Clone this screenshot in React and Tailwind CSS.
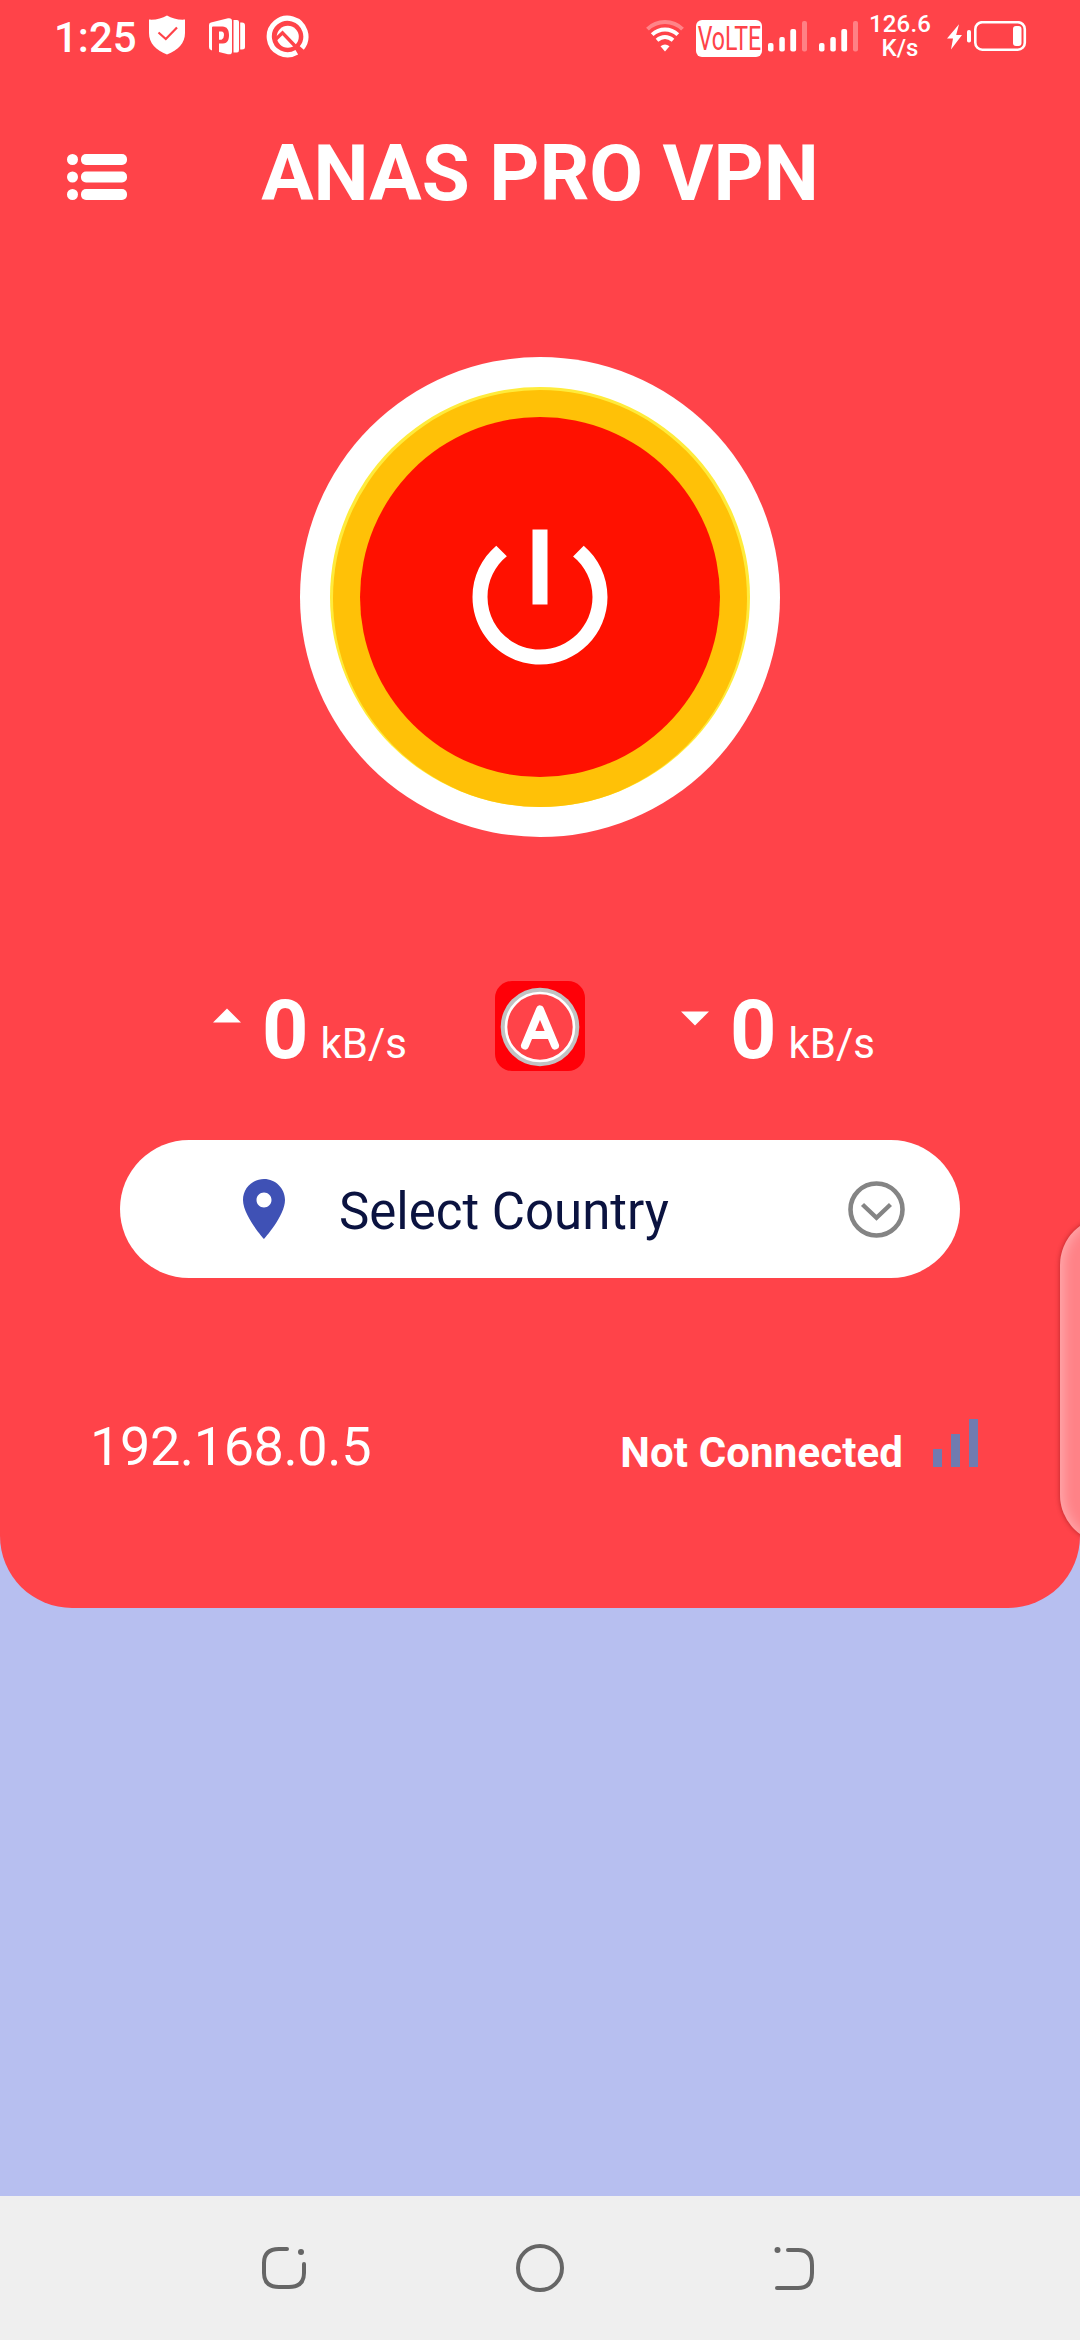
function ShieldIcon() {
  return (
    <svg className="h-10 w-9" viewBox="0 0 36 40">
      <path d="M18 0.5C23 3.5 29 5 36 4.6V18C36 28 29 35.5 18 39.5C7 35.5 0 28 0 18V4.6C7 5 13 3.5 18 0.5Z" fill="#fff" />
      <path d="M9.5 17.5L16.8 24L28 12.5" fill="none" stroke="#ff4349" strokeWidth="2.2" />
    </svg>
  )
}

function CardsIcon() {
  return (
    <svg className="h-[37px] w-9" viewBox="0 0 36 37" fill="#fff">
      <path d="M0 7Q0 5 2 4.6L19 0.3Q23 -0.3 23 3V33.5Q23 37 19 36.2L10 34V25.5H14C19 25.5 20 21 20 17C20 12 18 8.5 13.5 8.5H4Q3 8.5 3 9.5V32.4L2 32Q0 31.5 0 29Z" />
      <path d="M10 13.4H12.5Q15 13.4 15 17T12.5 21.8H10Z" />
      <path d="M24.5 2H28Q30 2 30 4V32Q30 34.5 28 34.5H24.5Z" />
      <path d="M31.2 4.5H33Q36 4.5 36 7.5V29Q36 31.5 33 31.5H31.2Z" />
    </svg>
  )
}

function SearchRingIcon() {
  return (
    <svg className="h-[43px] w-[43px]" viewBox="0 0 43 43" fill="none">
      <path d="M30.8 37.3A18.3 18.3 0 1 1 35.8 33" stroke="#fff" strokeWidth="5.2" />
      <circle cx="21.8" cy="21.8" r="11" fill="#fff" />
      <path d="M9.5 24.5L16.5 17.8L30.5 32.5" stroke="#ff4349" strokeWidth="3.4" />
    </svg>
  )
}

function WifiIcon() {
  return (
    <svg className="h-8 w-[38px]" viewBox="0 0 38 32" fill="none" stroke="#fff" strokeWidth="4">
      <path d="M1.5 9.2C11 -0.3 27 -0.3 36.5 9.2" opacity=".35" />
      <path d="M6.2 14.6C13.5 7.8 24.5 7.8 31.8 14.6" />
      <path d="M11 20.3C16 16 22 16 27 20.3" />
      <path d="M14.5 26.3Q19 22.5 23.5 26.3L19 31.5Z" fill="#fff" stroke="none" />
    </svg>
  )
}

function SignalIcon() {
  return (
    <svg className="h-[31px] w-10" viewBox="0 0 40 31" fill="#fff">
      <rect x="0" y="22" width="5.5" height="8.5" rx="2" />
      <rect x="11.3" y="16" width="5.5" height="14.5" rx="2" />
      <rect x="22.3" y="8" width="5.8" height="22.5" rx="2" />
      <rect x="34" y="0" width="5" height="30.5" rx="2" opacity=".33" />
    </svg>
  )
}

function BatteryIcon() {
  return (
    <svg className="h-[30px] w-20" viewBox="0 0 80 30" fill="#fff">
      <path d="M12 3.2L0 17.5H6L4 28.5L15 14H9.2Z" />
      <rect x="20" y="9" width="4" height="12.5" rx="1.8" />
      <rect x="28.3" y="1.2" width="49.5" height="27.5" rx="7" fill="none" stroke="#fff" strokeWidth="2.6" />
      <rect x="66" y="5" width="8.5" height="20" rx="3" />
    </svg>
  )
}

function StatusBar() {
  return (
    <div className="flex h-[75px] items-start justify-between pr-[53px] pl-[54px]">
      <div className="flex items-start">
        <span className="mt-[13px] w-[95px] text-[42px] leading-[50px] font-medium">1:25</span>
        <div className="mt-[15px] flex items-start">
          <ShieldIcon />
          <div className="mt-[3px] ml-6"><CardsIcon /></div>
          <div className="ml-[21px]"><SearchRingIcon /></div>
        </div>
      </div>
      <div className="flex items-start">
        <div className="mt-5 mr-3"><WifiIcon /></div>
        <div className="mt-5 mr-[6px] flex h-[37px] w-[66px] items-center justify-center rounded-md bg-white">
          <span className="scale-x-[0.7] text-[33px] leading-[37px] text-[#ff4349]">VoLTE</span>
        </div>
        <div className="mt-[21px] mr-[11px]"><SignalIcon /></div>
        <div className="mt-[21px]"><SignalIcon /></div>
        <div className="mt-3 flex w-[82px] flex-col items-center text-[24px] leading-6 font-medium">
          <span className="tracking-[0.2px]">126.6</span>
          <span>K/s</span>
        </div>
        <div className="mt-[21px] ml-[6px]"><BatteryIcon /></div>
      </div>
    </div>
  )
}

function MenuIcon() {
  return (
    <svg className="h-[46px] w-[60px]" viewBox="0 0 60 46" fill="#fff">
      {[0, 17.5, 35].map(y => (
        <g key={y}>
          <rect x="0" y={y} width="11" height="11" rx="5.5" />
          <rect x="14" y={y} width="46" height="11" rx="5" />
        </g>
      ))}
    </svg>
  )
}

function PowerButton() {
  return (
    <button className="mx-auto mt-[85px] flex h-[480px] w-[480px] items-center justify-center rounded-full bg-white">
      <div className="flex h-[420px] w-[420px] items-start justify-center rounded-full bg-[#ffeb3b] pt-[3px]">
        <div className="flex h-[417px] w-[414px] items-start justify-center rounded-[50%] bg-[#ffc107] pt-[27px]">
          <div className="flex h-[360px] w-[360px] items-center justify-center rounded-full bg-[#ff1100]">
            <svg className="h-[180px] w-[180px]" viewBox="0 0 24 24" fill="#fff">
              <path d="M13 3h-2v10h2V3zm4.83 2.17l-1.42 1.42C17.99 7.86 19 9.81 19 12c0 3.87-3.13 7-7 7s-7-3.13-7-7c0-2.19 1.01-4.14 2.58-5.42L6.17 5.17C4.23 6.82 3 9.26 3 12c0 4.97 4.03 9 9 9s9-4.03 9-9c0-2.74-1.23-5.18-3.17-6.83z" />
            </svg>
          </div>
        </div>
      </div>
    </button>
  )
}

function Speed({ value, down }) {
  return (
    <div className="flex w-[194px] items-start">
      <svg className={down ? 'mt-[30px] h-[15px] w-[30px]' : 'mt-[27px] h-[15px] w-[30px]'} viewBox="0 0 30 15" fill="#fff">
        <path d={down ? 'M0 0H30L15 15Z' : 'M0 15H30L15 0Z'} />
      </svg>
      <div className="mt-[2px] ml-[21px] flex items-baseline">
        <span className="text-[81px] leading-[96px] font-bold">{value}</span>
        <span className="ml-3 text-[42px]">kB/s</span>
      </div>
    </div>
  )
}

function Logo() {
  return (
    <svg className="h-[90px] w-[90px]" viewBox="0 0 90 90">
      <rect width="90" height="90" rx="17" fill="#ff0008" />
      <circle cx="45" cy="46" r="39.3" fill="#c2c2c2" />
      <circle cx="45" cy="46" r="34" fill="#ff4349" stroke="#fff" strokeWidth="2.6" />
      <path d="M30 64.5L45 28.5L60 64.5M36 54H54" fill="none" stroke="#fff" strokeWidth="8" strokeLinecap="round" strokeLinejoin="round" />
    </svg>
  )
}

function CountrySelect() {
  return (
    <button className="mx-[120px] mt-[69px] flex h-[138px] items-center rounded-full bg-white pr-[55px] pl-[108px] text-left">
      <svg className="h-[72px] w-[72px]" viewBox="0 0 24 24" fill="#3f51b5">
        <path d="M12 2C8.13 2 5 5.13 5 9c0 5.25 7 13 7 13s7-7.75 7-13c0-3.87-3.13-7-7-7zm0 9.5c-1.38 0-2.5-1.12-2.5-2.5s1.12-2.5 2.5-2.5 2.5 1.12 2.5 2.5-1.12 2.5-2.5 2.5z" />
      </svg>
      <span className="mt-[6px] ml-[39px] flex-1 text-[51px] leading-[60px] text-[#0b1340]">Select Country</span>
      <svg className="h-[57px] w-[57px]" viewBox="0 0 57 57" fill="none" stroke="#848484">
        <circle cx="28.5" cy="28.5" r="26" strokeWidth="4.6" />
        <path d="M14.5 23.5L28.5 36.8L42.5 23.5" strokeWidth="4.4" />
      </svg>
    </button>
  )
}

function NavBar() {
  return (
    <div className="flex h-[144px] items-center justify-between bg-[#efefef] pr-[262px] pl-[261px]">
      <svg className="h-12 w-12" viewBox="0 0 48 48" fill="none" stroke="#666" strokeWidth="4" strokeLinecap="round">
        <path d="M26 5H18Q3 5 3 19V29Q3 43 18 43H28Q43 43 43 29V20" />
        <circle cx="40" cy="8" r="3" fill="#666" stroke="none" />
      </svg>
      <svg className="h-12 w-12" viewBox="0 0 48 48" fill="none" stroke="#666" strokeWidth="4">
        <circle cx="24" cy="24" r="22" />
      </svg>
      <svg className="h-12 w-12" viewBox="0 0 48 48" fill="none" stroke="#666" strokeWidth="4" strokeLinecap="round">
        <path d="M18 6H28Q42 6 42 21V29Q42 44 28 44H7" />
        <circle cx="7.5" cy="6" r="3" fill="#666" stroke="none" />
      </svg>
    </div>
  )
}

export default function App() {
  return (
    <div className="relative flex h-[2340px] w-[1080px] flex-col overflow-hidden bg-[#b7bff0] font-['Roboto',sans-serif]">
      <main className="flex h-[1608px] flex-col rounded-b-[72px] bg-[#ff4349] text-white">
        <StatusBar />
        <header className="grid h-[197px] grid-cols-[194px_1fr_194px] items-center">
          <div className="mt-[7px] pl-[67px]"><MenuIcon /></div>
          <h1 className="text-center text-[78px] leading-none font-bold whitespace-nowrap">ANAS PRO VPN</h1>
        </header>
        <PowerButton />
        <section className="mt-36 flex h-[90px] justify-between pr-[205px] pl-[213px]">
          <Speed value="0" />
          <div className="-ml-2"><Logo /></div>
          <Speed value="0" down />
        </section>
        <CountrySelect />
        <footer className="mt-[138px] flex items-start justify-between pr-[102px] pl-[90px]">
          <span className="mt-px text-[54px] leading-[60px] tracking-[-0.4px]">192.168.0.5</span>
          <div className="flex items-end">
            <span className="mt-3 text-[42px] leading-[50px] font-bold tracking-[0.1px]">Not Connected</span>
            <svg className="mb-[11px] ml-[30px] h-12 w-[45px]" viewBox="0 0 45 48" fill="#707bb0">
              <path d="M0 30H9V48H0ZM18 15H27V48H18ZM36 0H45V48H36Z" />
            </svg>
          </div>
        </footer>
      </main>
      <div className="flex-1" />
      <NavBar />
      {/* edge panel handle */}
      <div className="absolute top-[1217px] -right-20 h-[326px] w-[100px] rounded-[48px] bg-[#ff8287] shadow-[inset_4px_0_12px_rgba(255,255,255,0.3),0_0_5px_rgba(90,0,0,0.45)]" />
    </div>
  )
}
